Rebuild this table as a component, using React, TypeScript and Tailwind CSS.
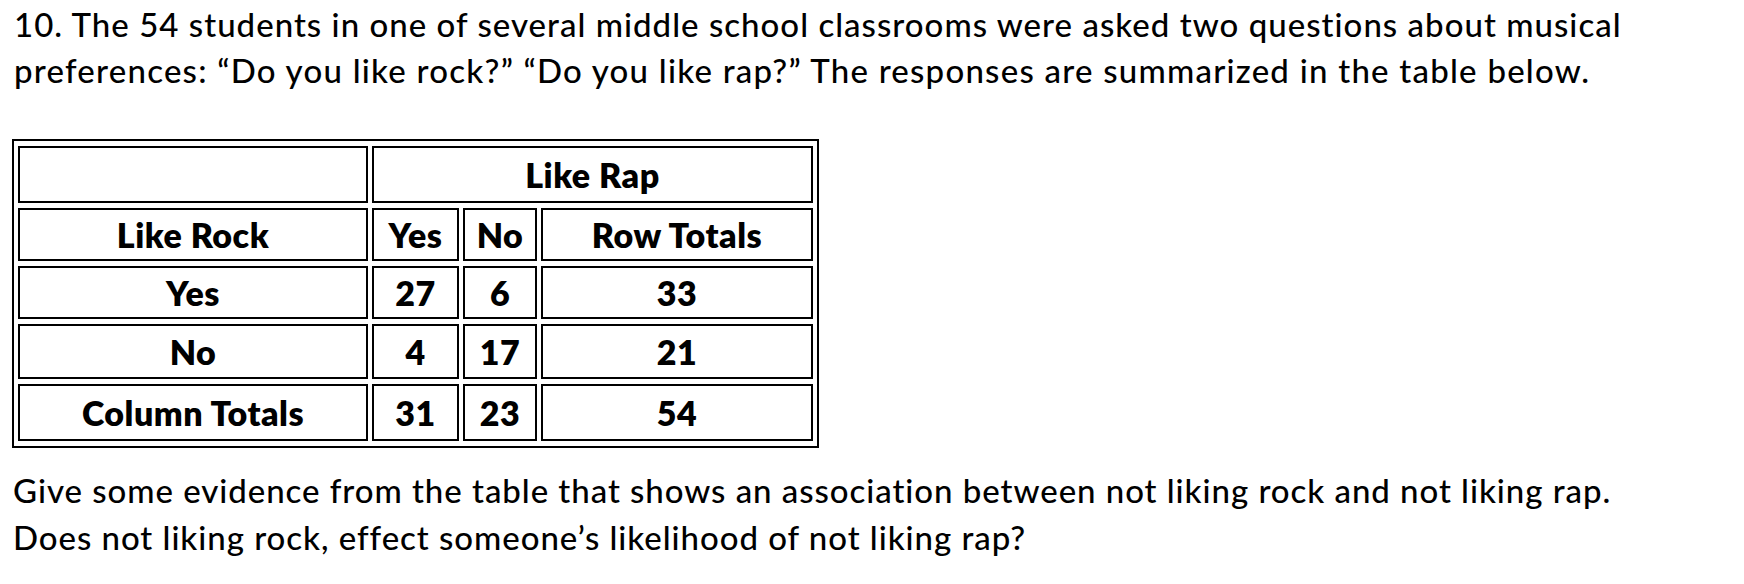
import React from 'react';

const rows = [
  { label: 'Yes', yes: '27', no: '6', total: '33', h: 'h-[53px]' },
  { label: 'No', yes: '4', no: '17', total: '21', h: 'h-[55px]' },
  { label: 'Column Totals', yes: '31', no: '23', total: '54', h: 'h-[57px]' },
];

const cell = 'border-2 border-black p-0 text-center align-middle font-extrabold';

const App: React.FC = () => {
  return (
    <div className="w-[1744px] h-[584px] bg-white text-black font-['Lato',sans-serif] overflow-hidden">
      <p className="pl-[14px] pt-[1px] text-[33px] leading-[46px] font-medium tracking-[1.02px] whitespace-nowrap">
        10. The 54 students in one of several middle school classrooms were asked two questions about musical
        <br />
        <span className="tracking-[1.23px]">
          preferences: “Do you like rock?” “Do you like rap?” The responses are summarized in the table below.
        </span>
      </p>

      <table className="ml-[12px] mt-[46px] border-2 border-black border-separate [border-spacing:4px_5px] text-[34px] leading-none tracking-[0.5px]">
        <tbody>
          <tr className="h-[57px]">
            <td className={`${cell} w-[350px]`}></td>
            <td className={cell} colSpan={3}>
              Like Rap
            </td>
          </tr>
          <tr className="h-[53px]">
            <td className={`${cell} w-[350px]`}>Like Rock</td>
            <td className={`${cell} w-[87px]`}>Yes</td>
            <td className={`${cell} w-[74px]`}>No</td>
            <td className={`${cell} w-[272px]`}>Row Totals</td>
          </tr>
          {rows.map((r) => (
            <tr key={r.label} className={r.h}>
              <td className={cell}>{r.label}</td>
              <td className={cell}>{r.yes}</td>
              <td className={cell}>{r.no}</td>
              <td className={cell}>{r.total}</td>
            </tr>
          ))}
        </tbody>
      </table>

      <p className="pl-[13px] mt-[19px] text-[33px] leading-[47px] font-medium tracking-[0.95px] whitespace-nowrap">
        Give some evidence from the table that shows an association between not liking rock and not liking rap.
        <br />
        Does not liking rock, effect someone’s likelihood of not liking rap?
      </p>
    </div>
  );
};

export default App;
